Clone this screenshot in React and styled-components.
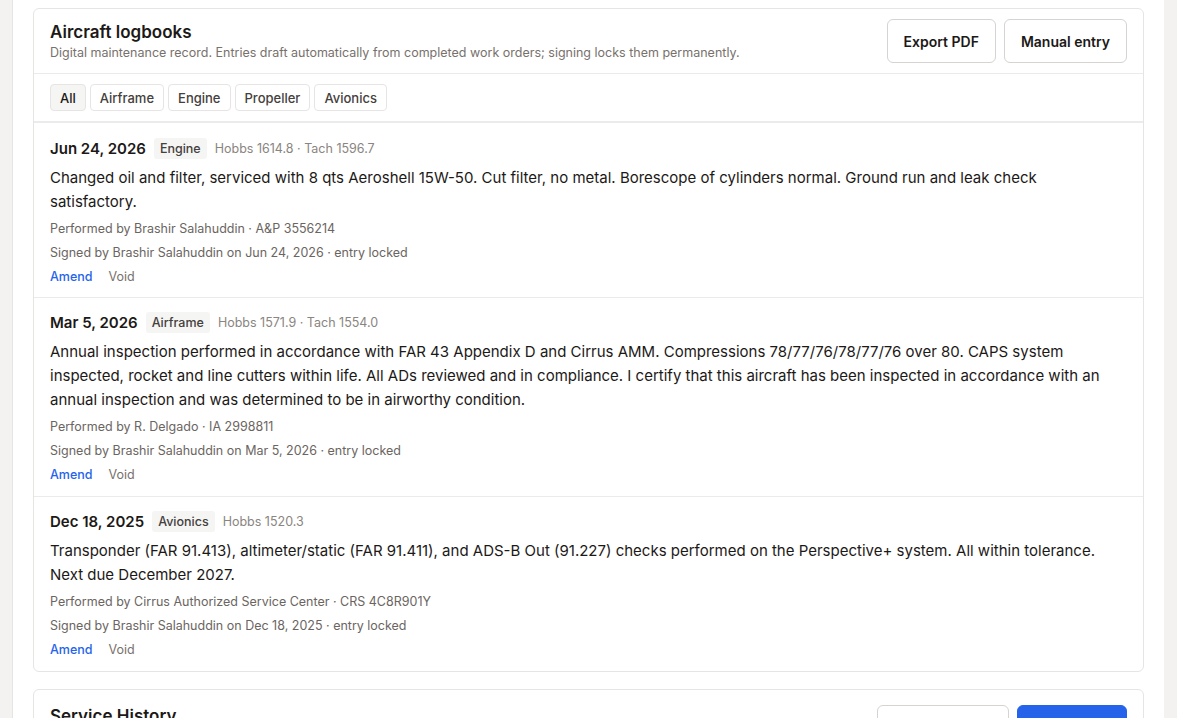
import styled, { createGlobalStyle } from 'styled-components';

const entries = [
  {
    date: 'Jun 24, 2026',
    system: 'Engine',
    meters: 'Hobbs 1614.8 · Tach 1596.7',
    text: 'Changed oil and filter, serviced with 8 qts Aeroshell 15W-50. Cut filter, no metal. Borescope of cylinders normal. Ground run and leak check satisfactory.',
    performer: 'Performed by Brashir Salahuddin · A&P 3556214',
    signed: 'Signed by Brashir Salahuddin on Jun 24, 2026 · entry locked',
  },
  {
    date: 'Mar 5, 2026',
    system: 'Airframe',
    meters: 'Hobbs 1571.9 · Tach 1554.0',
    text: 'Annual inspection performed in accordance with FAR 43 Appendix D and Cirrus AMM. Compressions 78/77/76/78/77/76 over 80. CAPS system inspected, rocket and line cutters within life. All ADs reviewed and in compliance. I certify that this aircraft has been inspected in accordance with an annual inspection and was determined to be in airworthy condition.',
    performer: 'Performed by R. Delgado · IA 2998811',
    signed: 'Signed by Brashir Salahuddin on Mar 5, 2026 · entry locked',
  },
  {
    date: 'Dec 18, 2025',
    system: 'Avionics',
    meters: 'Hobbs 1520.3',
    text: 'Transponder (FAR 91.413), altimeter/static (FAR 91.411), and ADS-B Out (91.227) checks performed on the Perspective+ system. All within tolerance. Next due December 2027.',
    performer: 'Performed by Cirrus Authorized Service Center · CRS 4C8R901Y',
    signed: 'Signed by Brashir Salahuddin on Dec 18, 2025 · entry locked',
  },
];

const filters = ['All', 'Airframe', 'Engine', 'Propeller', 'Avionics'];

const App = () => {
  return (
    <>
      <GlobalStyle />
      <StMain>
        <StCard>
          <StCardHeader>
            <StHeading>
              <h2>Aircraft logbooks</h2>
              <p>Digital maintenance record. Entries draft automatically from completed work orders; signing locks them permanently.</p>
            </StHeading>
            <StActions>
              <StButton>Export PDF</StButton>
              <StButton>Manual entry</StButton>
            </StActions>
          </StCardHeader>
          <StFilters>
            {filters.map((f) => (
              <StChip key={f} $active={f === 'All'}>
                {f}
              </StChip>
            ))}
          </StFilters>
          <StList>
            {entries.map((e) => (
              <StEntry key={e.date}>
                <StEntryHead>
                  <StDate>{e.date}</StDate>
                  <StBadge>{e.system}</StBadge>
                  <StMeters>{e.meters}</StMeters>
                </StEntryHead>
                <StBody>{e.text}</StBody>
                <StNote>{e.performer}</StNote>
                <StNote>{e.signed}</StNote>
                <StLinks>
                  <StLink $primary>Amend</StLink>
                  <StLink>Void</StLink>
                </StLinks>
              </StEntry>
            ))}
          </StList>
        </StCard>
        <StCard>
          <StCardHeader $top>
            <StHeading>
              <h2>Service History</h2>
            </StHeading>
            <StActions>
              <StButton $wide>&nbsp;</StButton>
              <StButton $primary>&nbsp;</StButton>
            </StActions>
          </StCardHeader>
        </StCard>
      </StMain>
    </>
  );
};
export default App;

const GlobalStyle = createGlobalStyle`
  * {
    box-sizing: border-box;
  }

  body {
    margin: 0;
    background: #f3f2f0;
    font-family: Inter, 'Noto Sans', sans-serif;
    color: #1c1917;
    overflow: hidden;
  }

  h2, p {
    margin: 0;
  }
`;

const StMain = styled.main`
  display: flex;
  flex-direction: column;
  gap: 17px;
  margin: 0 13px 0 12px;
  min-height: 718px;
  padding: 8px 20px;
  background: #fff;
  border-left: 1px solid #e7e5e4;
`;

const StCard = styled.section`
  background: #fff;
  border: 1px solid #e5e5e3;
  border-radius: 6px;
`;

const StCardHeader = styled.div`
  display: flex;
  justify-content: space-between;
  align-items: ${({ $top }) => ($top ? 'flex-start' : 'center')};
  padding: ${({ $top }) => ($top ? '15px 16px' : '10px 16px')};
  border-bottom: 1px solid #ebebea;
`;

const StHeading = styled.div`
  display: flex;
  flex-direction: column;
  gap: 2px;

  & h2 {
    font-size: 17px;
    font-weight: 600;
    color: #1c1917;
    line-height: 22px;
  }

  & p {
    font-size: 12.5px;
    color: #78716c;
    line-height: 16px;
  }
`;

const StActions = styled.div`
  display: flex;
  gap: 8px;
`;

const StButton = styled.button`
  height: 44px;
  padding: 0 16px;
  min-width: ${({ $wide, $primary }) => ($wide ? '132px' : $primary ? '110px' : 'auto')};
  font-family: inherit;
  font-size: 14px;
  font-weight: 600;
  color: #1c1917;
  background: ${({ $primary }) => ($primary ? '#2563eb' : '#fff')};
  border: 1px solid ${({ $primary }) => ($primary ? '#2563eb' : '#d6d3d1')};
  border-radius: 6px;
`;

const StFilters = styled.div`
  display: flex;
  gap: 4px;
  padding: 10px 16px;
  border-bottom: 1px solid #ebebea;
`;

const StChip = styled.button`
  height: 27px;
  padding: 0 9px;
  font-family: inherit;
  font-size: 13px;
  font-weight: 500;
  color: ${({ $active }) => ($active ? '#1c1917' : '#44403c')};
  background: ${({ $active }) => ($active ? '#f5f5f4' : '#fff')};
  border: 1px solid #e7e5e4;
  border-radius: 4px;
`;

const StList = styled.div`
  display: flex;
  flex-direction: column;
`;

const StEntry = styled.article`
  display: flex;
  flex-direction: column;
  padding: 14px 16px 11px;
  border-top: 1px solid #ebebea;

  & + & {
    padding: 13px 16px 12px;
  }
`;

const StEntryHead = styled.div`
  display: flex;
  align-items: center;
  gap: 8px;
  height: 22px;
`;

const StDate = styled.span`
  font-size: 15px;
  font-weight: 600;
  color: #1c1917;
`;

const StBadge = styled.span`
  padding: 3px 6px;
  font-size: 12.5px;
  font-weight: 500;
  color: #44403c;
  background: #f5f5f4;
  border-radius: 3px;
`;

const StMeters = styled.span`
  font-size: 12.5px;
  color: #8a8580;
`;

const StBody = styled.p`
  margin-top: 7px !important;
  font-size: 15px;
  line-height: 24px;
  color: #1c1917;
`;

const StNote = styled.p`
  margin-top: 6px !important;
  font-size: 12.5px;
  line-height: 18px;
  color: #6b6561;
`;

const StLinks = styled.div`
  display: flex;
  gap: 16px;
  margin-top: 6px;
  font-size: 12.5px;
  line-height: 18px;
`;

const StLink = styled.span`
  font-weight: ${({ $primary }) => ($primary ? 500 : 400)};
  color: ${({ $primary }) => ($primary ? '#2563eb' : '#78716c')};
  cursor: pointer;
`;
